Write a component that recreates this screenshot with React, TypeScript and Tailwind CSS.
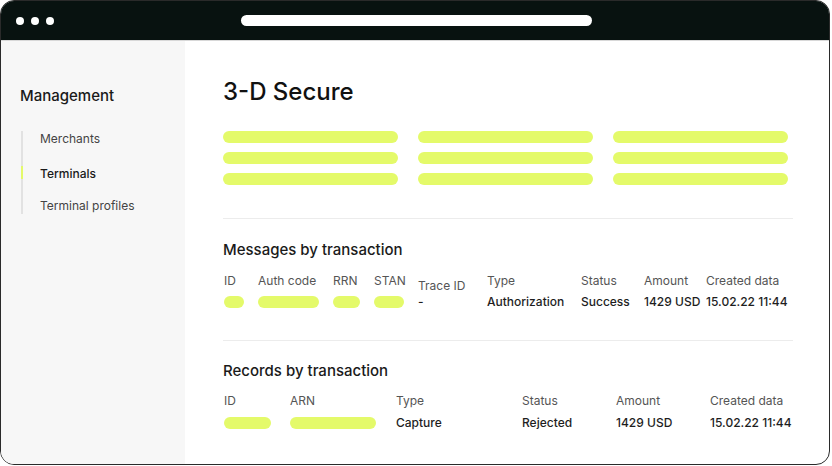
import React from "react";

const Y = "bg-[#e4fa6a]";

function Pill({ w }: { w: string }) {
  return <div className={`h-[12px] rounded-full ${Y} ${w}`} />;
}

export default function App() {
  return (
    <div className="w-[832px] h-[466px] bg-white" style={{ fontFamily: "Inter, 'Noto Sans', sans-serif" }}>
      <div className="w-[830px] h-[465px] rounded-[14px] border border-[#2a2a2a] overflow-hidden flex flex-col bg-white">
        {/* top bar */}
        <div className="h-[40px] shrink-0 bg-[#081210] flex items-center border-b border-[#d8d8d8]">
          <div className="w-[240px] flex items-center gap-[7px] pl-[15px]">
            <div className="w-2 h-2 rounded-full bg-white" />
            <div className="w-2 h-2 rounded-full bg-white" />
            <div className="w-2 h-2 rounded-full bg-white" />
          </div>
          <div className="w-[351px] h-[11px] rounded-full bg-white" />
        </div>
        {/* body */}
        <div className="flex-1 flex">
          <div className="w-[184px] shrink-0 bg-[#f7f7f7] pt-[45px] pl-[19px]">
            <div className="text-[15px] leading-5 font-medium text-[#1a1a1a]">Management</div>
            <div className="mt-[25px] ml-[1px] border-l-2 border-[#e2e2e2] pl-[17px] text-[12px] leading-4 text-[#444]">
              <div className="h-4">Merchants</div>
              <div className="h-4 mt-[19px] relative font-medium text-[#1a1a1a]">
                <div className="absolute left-[-19px] top-0 w-[2px] h-[13px] bg-[#e4fa6a]" />
                Terminals
              </div>
              <div className="h-4 mt-[16px]">Terminal profiles</div>
            </div>
          </div>
          <div className="flex-1 pl-[38px] pt-[35px]">
            <div className="w-[570px]">
              <div className="text-[24px] leading-8 font-medium text-[#111]">3-D Secure</div>
              <div className="mt-[23px] grid grid-cols-[175px_175px_175px] gap-x-[20px] gap-y-[9px]">
                {Array.from({ length: 9 }).map((_, i) => (
                  <div key={i} className={`h-[12px] rounded-full ${Y}`} />
                ))}
              </div>
              <div className="mt-[33px] h-px bg-[#ececec]" />

              <div className="mt-[21px] text-[15px] leading-5 font-medium text-[#1a1a1a]">Messages by transaction</div>
              <div className="mt-[13px] pl-[1px] flex h-4 items-start text-[12px] leading-4 text-[#555]">
                <div className="w-[34px]">ID</div>
                <div className="w-[75px]">Auth code</div>
                <div className="w-[41px]">RRN</div>
                <div className="w-[44px]">STAN</div>
                <div className="w-[69px] mt-[5px]">Trace ID</div>
                <div className="w-[94px]">Type</div>
                <div className="w-[63px]">Status</div>
                <div className="w-[62px]">Amount</div>
                <div>Created data</div>
              </div>
              <div className="mt-[5px] pl-[1px] flex h-4 items-center text-[12px] leading-4 font-medium text-[#1e1e1e]">
                <div className="w-[34px]"><Pill w="w-[20px]" /></div>
                <div className="w-[75px]"><Pill w="w-[61px]" /></div>
                <div className="w-[41px]"><Pill w="w-[27px]" /></div>
                <div className="w-[44px]"><Pill w="w-[30px]" /></div>
                <div className="w-[69px]">-</div>
                <div className="w-[94px]">Authorization</div>
                <div className="w-[63px]">Success</div>
                <div className="w-[62px]">1429 USD</div>
                <div>15.02.22 11:44</div>
              </div>
              <div className="mt-[30px] h-px bg-[#ececec]" />

              <div className="mt-[20px] text-[15px] leading-5 font-medium text-[#1a1a1a]">Records by transaction</div>
              <div className="mt-[12px] pl-[1px] flex h-4 items-start text-[12px] leading-4 text-[#555]">
                <div className="w-[66px]">ID</div>
                <div className="w-[106px]">ARN</div>
                <div className="w-[126px]">Type</div>
                <div className="w-[94px]">Status</div>
                <div className="w-[94px]">Amount</div>
                <div>Created data</div>
              </div>
              <div className="mt-[6px] pl-[1px] flex h-4 items-center text-[12px] leading-4 font-medium text-[#1e1e1e]">
                <div className="w-[66px]"><Pill w="w-[47px]" /></div>
                <div className="w-[106px]"><Pill w="w-[86px]" /></div>
                <div className="w-[126px]">Capture</div>
                <div className="w-[94px]">Rejected</div>
                <div className="w-[94px]">1429 USD</div>
                <div>15.02.22 11:44</div>
              </div>
            </div>
          </div>
        </div>
      </div>
    </div>
  );
}
